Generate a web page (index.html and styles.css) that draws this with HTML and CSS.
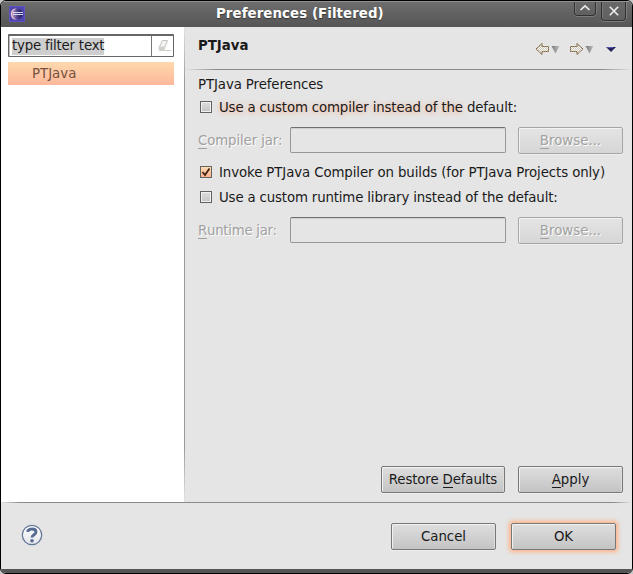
FILE: index.html
```html
<!DOCTYPE html>
<html lang="en">
<head>
<meta charset="utf-8">
<title>Preferences (Filtered)</title>
<link rel="stylesheet" href="styles.css">
</head>
<body>
<div class="window">
  <header class="titlebar">
    <svg class="logo" width="16" height="16" viewBox="0 0 16 16">
      <defs>
        <linearGradient id="orb"><stop offset="0" stop-color="#c9a3c8"/><stop offset=".45" stop-color="#57468f"/><stop offset="1" stop-color="#17164d"/></linearGradient>
      </defs>
      <rect width="16" height="16" fill="#4e45ae"/>
      <rect x=".5" y=".5" width="15" height="15" fill="none" stroke="#5f53bd"/>
      <ellipse cx="6.2" cy="8" rx="4.500" ry="5.500" fill="#e2c0d0"/>
      <circle cx="8.300" cy="8" r="5.300" fill="url(#orb)"/>
      <path d="M4 6.500h10M4 8.500h10" stroke="#d5daf5"/>
    </svg>
    <h1>Preferences (Filtered)</h1>
    <div class="controls">
      <button class="ctl shade" aria-label="Shade"><svg width="12" height="8" viewBox="0 0 12 8"><path d="M1.500 6 6 1.800 10.500 6"/></svg></button>
      <button class="ctl close" aria-label="Close"><svg width="12" height="12" viewBox="0 0 12 12"><path d="m1.800 1.800 8.400 8.400m0-8.400-8.400 8.400"/></svg></button>
    </div>
  </header>
  <main class="body">
    <nav class="side">
      <div class="filter">
        <div class="filter-input"><span>type filter text</span></div>
        <svg width="21" height="18" viewBox="0 0 21 18"><path d="M10.500 3.500h5l-3.500 9H8q-1.500 0-1-2z" fill="#f3f3f1" stroke="#c5c5c0"/><path d="m8 9.500h4.500l-1 3H7.500z" fill="#d2d2ce"/><path d="M7 13.500h12" stroke="#cfcfca"/></svg>
      </div>
      <div class="tree-item">PTJava</div>
    </nav>
    <section class="page">
      <div class="page-head">
        <h2>PTJava</h2>
        <svg width="86" height="16" viewBox="0 0 86 16">
          <defs>
            <pattern id="dots" width="2" height="2" patternUnits="userSpaceOnUse"><rect width="2" height="2" fill="#fbfaf5"/><path d="M0 0h1v1H0zM1 1h1v1H1z" fill="#c9c5bc"/></pattern>
            <linearGradient id="tri"><stop offset="0" stop-color="#777"/><stop offset="1" stop-color="#c0c0c0"/></linearGradient>
          </defs>
          <g fill="url(#dots)" stroke="#a8a195">
            <path d="M2 8 8 2.500v3h6.500v5H8v3z"/>
            <path d="M49 8 43 2.500v3h-6.500v5H43v3z"/>
          </g>
          <g fill="none" stroke="#7c5c22" stroke-dasharray="1 1">
            <path d="M2 8 8 2.500v3h6.500v5H8v3z"/>
            <path d="M49 8 43 2.500v3h-6.500v5H43v3z"/>
          </g>
          <path d="M17.500 5h8l-4 7.500z" fill="url(#tri)"/>
          <path d="M51.500 5h8l-4 7.500z" fill="url(#tri)"/>
          <path d="M72 6h10l-5 5z" fill="#25235f"/>
          <path d="M73 6.500h6" stroke="#5555b8"/>
        </svg>
      </div>
      <div class="form">
        <p class="caption">PTJava Preferences</p>
        <label class="check"><i class="box"></i><span class="focused"><b>Use a custom compiler instead of the </b>default:</span></label>
        <div class="field first"><span class="name compiler"><u>C</u>ompiler jar:</span><div class="entry"></div><button class="btn off"><span><u>B</u>rowse...</span></button></div>
        <label class="check invoke"><i class="box on"><svg width="10" height="10" viewBox="0 0 10 10"><path d="m1.500 5 2.500 3 4.500-6.500"/></svg></i><span>Invoke PTJava Compiler on builds (for PTJava Projects only)</span></label>
        <label class="check"><i class="box"></i><span>Use a custom runtime library instead of the default:</span></label>
        <div class="field"><span class="name runtime"><u>R</u>untime jar:</span><div class="entry"></div><button class="btn off"><span><u>B</u>rowse...</span></button></div>
      </div>
      <div class="page-actions">
        <button class="btn wide"><span>Restore <u>D</u>efaults</span></button>
        <button class="btn"><span><u>A</u>pply</span></button>
      </div>
    </section>
  </main>
  <footer class="foot">
    <svg class="help" width="22" height="22" viewBox="0 0 22 22">
      <defs><linearGradient id="hg" x2="0" y2="1"><stop offset="0" stop-color="#fff"/><stop offset="1" stop-color="#e2e5ea"/></linearGradient></defs>
      <circle cx="11" cy="11" r="9.700" fill="url(#hg)" stroke="#66799b" stroke-width="1.300"/>
      <path d="M7 8V6.500Q8.500 5 11 5c2.600 0 4 1.200 4 3 0 2.700-4 2.800-4 5.500" fill="none" stroke="#586b93" stroke-width="2.900"/>
      <circle cx="11" cy="16.800" r="1.800" fill="#586b93"/>
    </svg>
    <button class="btn"><span>Cancel</span></button>
    <button class="btn default"><span>OK</span></button>
  </footer>
  <div class="bottom-edge"></div>
</div>
</body>
</html>
```

FILE: styles.css
```css
* { box-sizing: border-box; }
body {
  margin: 0;
  background: #c8c8c8;
  font: 13.333px/17px "DejaVu Sans", sans-serif;
  color: #1a1a1a;
}
h1, h2, p { margin: 0; font-size: inherit; }
svg { display: block; }
button { font: inherit; color: inherit; padding: 0; }
u { text-decoration: none; box-shadow: 0 1px currentColor; display: inline-block; line-height: 14px; }

.window {
  width: 633px;
  height: 574px;
  display: flex;
  flex-direction: column;
  border: 1px solid #000;
  border-radius: 6px;
  background: #e5e5e5;
  overflow: hidden;
}
.titlebar {
  height: 26px;
  flex: none;
  display: flex;
  align-items: flex-start;
  padding-left: 8px;
  background: linear-gradient(#6d6d6d, #555);
  border-top: 1px solid #929292;
  color: #fff;
}
.logo { margin-top: 4px; }
.titlebar h1 {
  font-weight: bold;
  letter-spacing: 0.09px;
  margin: 3px auto 0 191px;
  text-shadow: 0 1px 1px #333;
}
.controls { display: flex; gap: 5px; padding-right: 6px; }
.ctl {
  display: flex;
  justify-content: center;
  border: 1px solid #323232;
  border-top: 0;
  border-radius: 0 0 4px 4px;
  background: linear-gradient(#696969, #606060);
  box-shadow: 0 1px #7c7c7c, 1px 0 #7c7c7c, inset 1px 0 #777;
}
.ctl path { fill: none; stroke: #eee; stroke-width: 1.6; }
.shade { width: 22px; height: 14px; padding-top: 2px; }
.close { width: 25px; height: 19px; padding-top: 3px; }

.body { display: flex; height: 475px; flex: none; }
.side { width: 183px; background: #fff; padding: 7px 10px 0 7px; }
.filter {
  height: 23px;
  display: flex;
  align-items: center;
  border: 1px solid #666;
  border-top-width: 2px;
  border-radius: 1px;
}
.filter-input { flex: 1; height: 20px; padding: 1px 0 0 3px; border-right: 1px solid #777; box-shadow: inset 1px 0 #bbb; letter-spacing: -0.2px; }
.filter-input span { display: inline-block; background: #cecece; height: 17px; line-height: 16px; }
.tree-item {
  height: 23px;
  margin-top: 5px;
  padding: 3px 0 0 24px;
  background: linear-gradient(#ffd9ad, #fdb79b);
  color: #765040;
}
.page { flex: 1; display: flex; flex-direction: column; border-left: 1px solid; border-image: linear-gradient(#e5e5e5, #999 12%, #999 88%, #e5e5e5) 1; }
.page-head {
  height: 43px;
  flex: none;
  display: flex;
  justify-content: space-between;
  padding: 10px 12px 0 13px;
  background: linear-gradient(90deg, #e5e5e5, #8b8b8b 7%, #8b8b8b 93%, #e5e5e5) bottom / 100% 1px no-repeat;
}
.page-head svg { margin-top: 4px; }
.form { padding: 6px 8px 0 13px; }
.caption { height: 18px; letter-spacing: -0.1px; }
.check { display: flex; align-items: center; height: 25px; padding-left: 2px; letter-spacing: -0.155px; }
.check.invoke { letter-spacing: -0.105px; }
.check > span { padding-left: 7px; margin-top: 1px; }
.box {
  width: 12px;
  height: 12px;
  border: 1px solid #626262;
  background: linear-gradient(#dedede, #c4c4c4);
  box-shadow: inset 0 0 0 1px #f0f0f0;
}
.box.on { background: linear-gradient(#ffdcb0, #ffb38c); box-shadow: none; }
.box path { fill: none; stroke: #442015; stroke-width: 1.8; }
.focused b { font-weight: normal; text-shadow: 0 1px 5px rgba(255, 150, 95, 0.75); }
.field { display: flex; height: 27px; margin-top: 8px; }
.field.first { margin-bottom: 5px; }
.name { width: 92px; padding-top: 5px; color: #a1a1a1; text-shadow: 1px 1px #fff; }
.name.compiler { letter-spacing: -0.12px; }
.name.runtime { letter-spacing: -0.28px; }
.entry {
  width: 216px;
  height: 26px;
  margin-right: 12px;
  border: 1px solid #979797;
  border-top-color: #707070;
  border-radius: 2px;
  box-shadow: inset 0 1px #d0d0d0;
}
.btn {
  width: 105px;
  height: 27px;
  border: 1px solid #777;
  border-radius: 2px;
  background: linear-gradient(#dedede, #c4c4c4);
  box-shadow: inset 1px 1px #f2f2f2, inset -1px 0 #ddd, 0 1px #eee;
}
.btn.wide { width: 124px; letter-spacing: -0.13px; }
.btn.off {
  border-color: #a6a6a6;
  background: linear-gradient(#e4e4e4, #d6d6d6);
  color: #a1a1a1;
  text-shadow: 1px 1px #fff;
}
.btn.default { box-shadow: inset 1px 1px #f2f2f2, 0 0 4px 2px #ffb286; }
.page-actions { display: flex; justify-content: flex-end; gap: 13px; margin-top: auto; padding: 0 9px 9px 0; }
.foot {
  flex: 1;
  display: flex;
  gap: 15px;
  align-items: flex-start;
  padding: 21px 16px 0 20px;
  background: linear-gradient(90deg, #e5e5e5, #8b8b8b 3%, #8b8b8b 97%, #e5e5e5) top / 100% 1px no-repeat;
}
.help { margin: 1px auto 0 0; }
.bottom-edge { height: 4px; flex: none; background: #555; }
```
